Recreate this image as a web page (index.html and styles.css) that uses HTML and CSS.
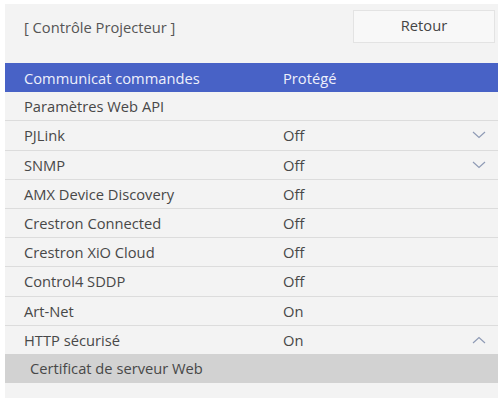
FILE: index.html
```html
<!DOCTYPE html>
<html lang="fr">
<head>
	<meta charset="UTF-8">
	<title>Contrôle Projecteur</title>
	<link rel="stylesheet" href="styles.css">
</head>
<body>
	<div class="panel">
		<div class="header">
			<span class="title">[ Contrôle Projecteur ]</span>
			<button class="back">Retour</button>
		</div>
		<ul class="menu">
			<li class="row selected"><span class="name">Communicat commandes</span><span class="value">Protégé</span></li>
			<li class="row"><span class="name">Paramètres Web API</span></li>
			<li class="row"><span class="name">PJLink</span><span class="value">Off</span>
				<svg class="chev" viewBox="0 0 14 8"><path d="M1 1 L7 6.5 L13 1"/></svg></li>
			<li class="row"><span class="name">SNMP</span><span class="value">Off</span>
				<svg class="chev" viewBox="0 0 14 8"><path d="M1 1 L7 6.5 L13 1"/></svg></li>
			<li class="row"><span class="name">AMX Device Discovery</span><span class="value">Off</span></li>
			<li class="row"><span class="name">Crestron Connected</span><span class="value">Off</span></li>
			<li class="row"><span class="name">Crestron XiO Cloud</span><span class="value">Off</span></li>
			<li class="row"><span class="name">Control4 SDDP</span><span class="value">Off</span></li>
			<li class="row"><span class="name">Art-Net</span><span class="value">On</span></li>
			<li class="row"><span class="name">HTTP sécurisé</span><span class="value">On</span>
				<svg class="chev" viewBox="0 0 14 8"><path d="M1 7 L7 1.5 L13 7"/></svg></li>
			<li class="row sub"><span class="name">Certificat de serveur Web</span></li>
		</ul>
	</div>
</body>
</html>
```

FILE: styles.css
```css
* {
	margin: 0;
	padding: 0;
	box-sizing: border-box;
}
body {
	background: #fff;
	font-family: "Open Sans", "Liberation Sans", sans-serif;
	font-size: 14.7px;
	color: #484848;
	padding: 4px 6px 0 5px;
}
.panel {
	background: #f3f3f3;
	height: 394px;
}
.header {
	display: flex;
	justify-content: space-between;
	align-items: flex-start;
	height: 59px;
	padding: 6px 3px 0 19px;
}
.title {
	margin-top: 7px;
	color: #555;
}
.back {
	width: 142px;
	height: 33px;
	background: #f8f8f8;
	border: 1px solid #e3e3e3;
	font-family: inherit;
	font-size: 14.7px;
	color: #444;
	padding-bottom: 3px;
}
.menu {
	list-style: none;
}
.row {
	display: flex;
	align-items: center;
	height: 29.2px;
	border-bottom: 1px solid #dcdcdc;
	padding-left: 19px;
	position: relative;
}
.row .name {
	width: 259px;
}
.selected {
	background: #4862c6;
	color: #eef0fb;
	border-bottom: none;
}
.chev {
	position: absolute;
	right: 12px;
	top: 10px;
	width: 14px;
	height: 8px;
	fill: none;
	stroke: #8f9bb5;
	stroke-width: 1.2;
}
.sub {
	background: #d2d2d2;
	padding-left: 25px;
	border-bottom: none;
	margin-top: -1px;
}
```
